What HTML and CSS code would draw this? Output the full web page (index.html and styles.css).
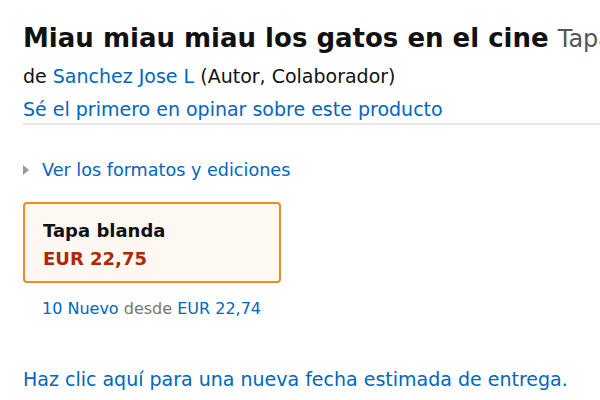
FILE: index.html
```html
<!DOCTYPE html>
<html lang="es">
<head>
<meta charset="utf-8">
<title>Miau miau miau los gatos en el cine</title>
<link rel="stylesheet" href="styles.css">
</head>
<body>
<div class="page">
  <h1 class="title"><span class="title-main">Miau miau miau los gatos en el cine</span> <span class="title-format">Tapa blanda</span></h1>
  <div class="byline">de <a class="link" href="#">Sanchez Jose L</a> (Autor, Colaborador)</div>
  <div class="review"><a class="link" href="#">Sé el primero en opinar sobre este producto</a></div>
  <hr class="divider">
  <div class="formats"><span class="caret"></span><a class="link" href="#">Ver los formatos y ediciones</a></div>
  <div class="swatch">
    <div class="swatch-name">Tapa blanda</div>
    <div class="swatch-price">EUR 22,75</div>
  </div>
  <div class="offers"><a class="link" href="#">10 Nuevo</a> <span class="muted">desde</span> <a class="link" href="#">EUR 22,74</a></div>
  <div class="delivery"><a class="link" href="#">Haz clic aquí para una nueva fecha estimada de entrega.</a></div>
</div>
</body>
</html>
```
FILE: styles.css
```css
html, body {
  margin: 0;
  padding: 0;
  background: #ffffff;
  overflow: hidden;
}
body {
  font-family: "DejaVu Sans", "Noto Sans", sans-serif;
  color: #111111;
  width: 600px;
  height: 400px;
}
.page {
  padding: 22px 0 0 23px;
  display: flex;
  flex-direction: column;
}
.link {
  color: #0066c0;
  text-decoration: none;
}
.title {
  margin: 0;
  font-size: 26px;
  line-height: 32px;
  font-weight: 700;
  white-space: nowrap;
  overflow: hidden;
}
.title-format {
  font-weight: 400;
  color: #555555;
  font-size: 24px;
}
.byline {
  margin-top: 8px;
  font-size: 19px;
  line-height: 26px;
  color: #111;
}
.review {
  margin-top: 7px;
  font-size: 19px;
  line-height: 26px;
}
.divider {
  margin: 1px 0 0 0;
  border: 0;
  height: 2px;
  background: #e7e7e7;
}
.formats {
  margin-top: 33px;
  display: flex;
  align-items: center;
  font-size: 17.6px;
  line-height: 24px;
}
.caret {
  width: 0;
  height: 0;
  border-top: 5px solid transparent;
  border-bottom: 5px solid transparent;
  border-left: 6px solid #999999;
  margin: 0 13px 0 0;
}
.swatch {
  margin-top: 20px;
  width: 258px;
  height: 81px;
  box-sizing: border-box;
  border: 2px solid #f08a24;
  border-radius: 4px;
  background: #fef8f2;
  padding: 14px 0 0 18px;
}
.swatch-name {
  font-size: 18px;
  font-weight: 700;
  line-height: 26px;
}
.swatch-price {
  font-size: 18px;
  font-weight: 700;
  color: #b12704;
  line-height: 29px;
}
.offers {
  margin: 15px 0 0 19px;
  font-size: 16px;
  line-height: 22px;
}
.muted { color: #767676; }
.delivery {
  margin-top: 46px;
  font-size: 19px;
  line-height: 26px;
}
```
